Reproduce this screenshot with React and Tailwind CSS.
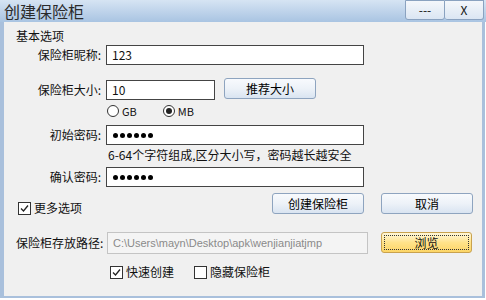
import React from "react";

const F = { fontFamily: '"Noto Sans CJK SC", "DejaVu Sans", sans-serif' };

function Dots() {
  return (
    <div className="flex items-center gap-[2px] pl-[6px] h-full">
      {[0, 1, 2, 3, 4, 5].map((i) => (
        <div key={i} className="w-[5px] h-[5px] rounded-full bg-black" />
      ))}
    </div>
  );
}

function Check({ checked }) {
  return (
    <div className="w-[13px] h-[13px] border border-[#333] bg-white flex items-center justify-center">
      {checked && (
        <svg width="11" height="11" viewBox="0 0 11 11">
          <path d="M2 5.5 L4.5 8 L9 2.5" fill="none" stroke="#222" strokeWidth="1.3" />
        </svg>
      )}
    </div>
  );
}

function Radio({ checked }) {
  return (
    <div className="w-[12px] h-[12px] rounded-full border border-[#333] bg-white flex items-center justify-center">
      {checked && <div className="w-[6px] h-[6px] rounded-full bg-[#222]" />}
    </div>
  );
}

function Btn({ children, className = "" }) {
  return (
    <div
      className={
        "flex items-center justify-center rounded-[3px] border border-[#8ea4bf] bg-gradient-to-b from-[#f8fafd] via-[#edf2f8] to-[#d9e4f1] text-[12px] text-black " +
        className
      }
    >
      {children}
    </div>
  );
}

export default function App() {
  return (
    <div className="w-[486px] h-[300px] bg-white overflow-hidden text-[#111]" style={F}>
      <div className="w-[486px] h-[298px] flex flex-col">
        {/* title bar */}
        <div className="h-[22px] flex items-start bg-gradient-to-b from-[#d6e4f3] to-[#a9c4e2]">
          <div className="pl-[4px] h-[22px] text-[16px] leading-[22px] text-[#2a2a2a] whitespace-nowrap">创建保险柜</div>
          <div className="ml-auto flex mr-[2px]">
            <div className="w-[40px] h-[20px] border border-[#8aa2c0] rounded-b-[3px] bg-gradient-to-b from-[#f4f7fb] to-[#dbe6f3] flex items-center justify-center text-[12px] leading-none">---</div>
            <div className="w-[39px] h-[20px] border border-l-0 border-[#8aa2c0] rounded-b-[3px] bg-gradient-to-b from-[#f4f7fb] to-[#dbe6f3] flex items-center justify-center text-[12px] leading-none">X</div>
          </div>
        </div>
        {/* body */}
        <div className="flex-1 bg-[#f0f0f0] border-l-[4px] border-r-[3px] border-b-[2px] border-[#a9c0dc] flex flex-col text-[12px] mr-[1px]">
          <div className="mt-[6px] h-[16px] pl-[12px] leading-[16px]">基本选项</div>

          <div className="mt-[1px] h-[20px] flex">
            <div className="w-[97px] text-right leading-[20px]">保险柜昵称:</div>
            <div className="ml-[5px] w-[258px] h-[20px] border border-[#444] bg-white pl-[5px] leading-[18px]">123</div>
          </div>

          <div className="mt-[13px] h-[22px] flex">
            <div className="w-[97px] text-right leading-[20px] mt-[2px]">保险柜大小:</div>
            <div className="ml-[5px] mt-[2px] w-[109px] h-[20px] border border-[#444] bg-white pl-[5px] leading-[18px]">10</div>
            <Btn className="ml-[9px] w-[92px] h-[21px]">推荐大小</Btn>
          </div>

          <div className="mt-[4px] h-[14px] flex items-center pl-[103px]">
            <Radio />
            <span className="ml-[3px] text-[11px]">GB</span>
            <div className="ml-[26px]"><Radio checked /></div>
            <span className="ml-[3px] text-[11px]">MB</span>
          </div>

          <div className="mt-[7px] h-[20px] flex">
            <div className="w-[97px] text-right leading-[20px]">初始密码:</div>
            <div className="ml-[5px] w-[258px] h-[20px] border border-[#444] bg-white"><Dots /></div>
          </div>

          <div className="mt-[3px] h-[14px] pl-[104px] leading-[14px]">6-64个字符组成,区分大小写，密码越长越安全</div>

          <div className="mt-[5px] h-[20px] flex">
            <div className="w-[97px] text-right leading-[20px]">确认密码:</div>
            <div className="ml-[5px] w-[258px] h-[20px] border border-[#444] bg-white"><Dots /></div>
          </div>

          <div className="mt-[6px] h-[21px] flex">
            <div className="pl-[14px] mt-[8px] flex items-center h-[14px]">
              <Check checked />
              <span className="ml-[3px] text-[12px]">更多选项</span>
            </div>
            <Btn className="ml-auto w-[92px] h-[21px]">创建保险柜</Btn>
            <Btn className="ml-[17px] mr-[9px] w-[92px] h-[21px]">取消</Btn>
          </div>

          <div className="mt-[18px] h-[22px] flex">
            <div className="pl-[12px] w-[103px] leading-[22px] whitespace-nowrap">保险柜存放路径:</div>
            <div className="w-[261px] h-[22px] border border-[#c4c4c4] bg-[#f4f4f4] text-[#8a8a8a] pl-[5px] leading-[20px] text-[11px] overflow-hidden whitespace-nowrap" style={{ fontFamily: '"Liberation Sans", sans-serif' }}>C:\Users\mayn\Desktop\apk\wenjianjiatjmp</div>
            <div className="ml-[13px] w-[91px] h-[21px] rounded-[3px] border border-[#c9a24e] bg-gradient-to-b from-[#fff7d8] via-[#ffe38a] to-[#fcd566] p-[2px]">
              <div className="w-full h-full border border-dotted border-[#333] flex items-center justify-center leading-none">浏览</div>
            </div>
          </div>

          <div className="mt-[11px] h-[14px] flex items-center">
            <div className="pl-[106px] flex items-center">
              <Check checked />
              <span className="ml-[3px] text-[12px]">快速创建</span>
            </div>
            <div className="ml-[20px] flex items-center">
              <Check />
              <span className="ml-[3px] text-[12px]">隐藏保险柜</span>
            </div>
          </div>
        </div>
      </div>
    </div>
  );
}
